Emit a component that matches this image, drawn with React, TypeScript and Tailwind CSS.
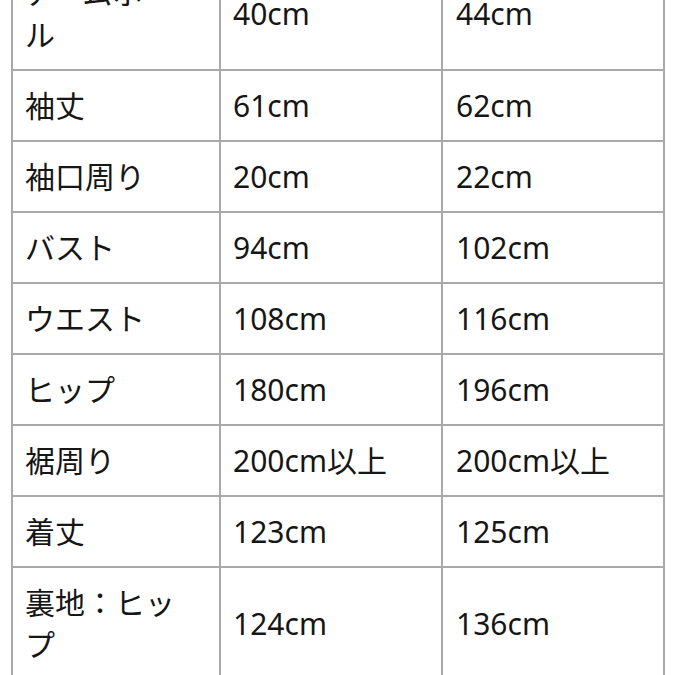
const rows: [string, string, string][] = [
  ['アームホール', '40cm', '44cm'],
  ['袖丈', '61cm', '62cm'],
  ['袖口周り', '20cm', '22cm'],
  ['バスト', '94cm', '102cm'],
  ['ウエスト', '108cm', '116cm'],
  ['ヒップ', '180cm', '196cm'],
  ['裾周り', '200cm以上', '200cm以上'],
  ['着丈', '123cm', '125cm'],
  ['裏地：ヒップ', '124cm', '136cm'],
];

export default function App() {
  return (
    <div className="h-[675px] w-[675px] overflow-hidden bg-white font-['Noto_Sans','Noto_Sans_CJK_JP',sans-serif] text-[#161616]">
      <table className="ml-[11px] -mt-[44px] w-[652px] table-fixed border-collapse">
        <colgroup>
          <col className="w-[208px]" />
          <col className="w-[222px]" />
          <col className="w-[222px]" />
        </colgroup>
        <tbody>
          {rows.map(([label, a, b]) => (
            <tr key={label}>
              <td className="border-2 border-[#a9a9a9] pt-[14px] pb-[13px] pl-[12px] pr-[18px] align-middle text-[30px] leading-[42px]">
                {label}
              </td>
              <td className="border-2 border-[#a9a9a9] pt-[14px] pb-[13px] pl-[12px] pr-[12px] align-middle text-[30px] leading-[42px]">
                {a}
              </td>
              <td className="border-2 border-[#a9a9a9] pt-[14px] pb-[13px] pl-[13px] pr-[12px] align-middle text-[30px] leading-[42px]">
                {b}
              </td>
            </tr>
          ))}
        </tbody>
      </table>
    </div>
  );
}
